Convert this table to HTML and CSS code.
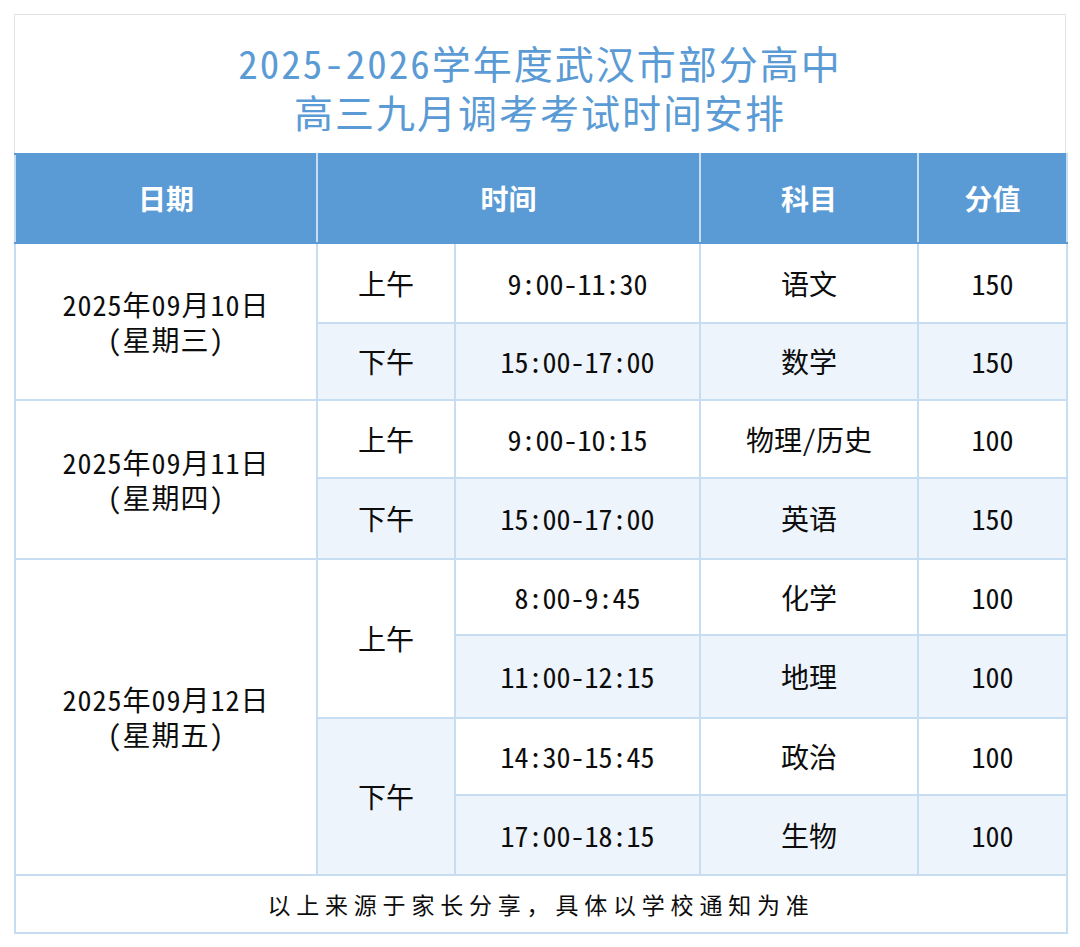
FILE: index.html
```html
<!DOCTYPE html>
<html lang="zh-CN">
<head>
<meta charset="utf-8">
<title>2025-2026学年度武汉市部分高中高三九月调考考试时间安排</title>
<link rel="stylesheet" href="styles.css">
</head>
<body>
<div class="sheet">
  <div class="title">
    <div class="title-line">2025-2026学年度武汉市部分高中</div>
    <div class="title-line">高三九月调考考试时间安排</div>
  </div>
  <table class="sched">
    <colgroup>
      <col class="c-date"><col class="c-half"><col class="c-time"><col class="c-subj"><col class="c-score">
    </colgroup>
    <thead>
      <tr class="h-row">
        <th>日期</th>
        <th colspan="2">时间</th>
        <th>科目</th>
        <th>分值</th>
      </tr>
    </thead>
    <tbody>
      <tr class="r1">
        <td rowspan="2" class="date"><div class="d-line">2025年09月10日</div><div class="d-line">(星期三)</div></td>
        <td>上午</td>
        <td>9:00-11:30</td>
        <td>语文</td>
        <td>150</td>
      </tr>
      <tr class="r2 alt">
        <td>下午</td>
        <td>15:00-17:00</td>
        <td>数学</td>
        <td>150</td>
      </tr>
      <tr class="r3">
        <td rowspan="2" class="date"><div class="d-line">2025年09月11日</div><div class="d-line">(星期四)</div></td>
        <td>上午</td>
        <td>9:00-10:15</td>
        <td>物理/历史</td>
        <td>100</td>
      </tr>
      <tr class="r4 alt">
        <td>下午</td>
        <td>15:00-17:00</td>
        <td>英语</td>
        <td>150</td>
      </tr>
      <tr class="r5">
        <td rowspan="4" class="date"><div class="d-line">2025年09月12日</div><div class="d-line">(星期五)</div></td>
        <td rowspan="2" class="white">上午</td>
        <td>8:00-9:45</td>
        <td>化学</td>
        <td>100</td>
      </tr>
      <tr class="r6 alt">
        <td>11:00-12:15</td>
        <td>地理</td>
        <td>100</td>
      </tr>
      <tr class="r7">
        <td rowspan="2" class="tint">下午</td>
        <td>14:30-15:45</td>
        <td>政治</td>
        <td>100</td>
      </tr>
      <tr class="r8 alt">
        <td>17:00-18:15</td>
        <td>生物</td>
        <td>100</td>
      </tr>
      <tr class="f-row">
        <td colspan="5" class="note">以上来源于家长分享，具体以学校通知为准</td>
      </tr>
    </tbody>
  </table>
</div>
</body>
</html>
```

FILE: styles.css
```css
html, body {
  margin: 0;
  padding: 0;
  background: #ffffff;
}

body {
  font-family: "Noto Sans Mono CJK SC", "Noto Sans CJK SC", sans-serif;
  color: #111111;
}

.sheet {
  width: 1052px;
  margin: 14px 0 0 14px;
}

.title {
  box-sizing: border-box;
  height: 139px;
  border: 1px solid #e2e2e2;
  border-bottom: none;
  padding-top: 23px;
  text-align: center;
  color: #5b9bd5;
  font-size: 39px;
  line-height: 49px;
  letter-spacing: 2px;
  font-weight: 500;
}

.sched {
  width: 1052px;
  table-layout: fixed;
  border-collapse: collapse;
  border: 2px solid #7fb1e1;
}

.c-date { width: 302px; }
.c-half { width: 138px; }
.c-time { width: 245px; }
.c-subj { width: 218px; }
.c-score { width: 149px; }

.sched th,
.sched td {
  padding: 0;
  text-align: center;
  vertical-align: middle;
  font-size: 28px;
  line-height: 35px;
  font-weight: 400;
  border: 2px solid #c7ddf1;
  background: #ffffff;
  color: #0d0d0d;
}

.sched th {
  background: #5b9bd5;
  color: #ffffff;
  font-weight: 700;
  border-top: 2px solid #5b9bd5;
  border-bottom: 2px solid #5b9bd5;
}

.h-row { height: 89px; }
.r1 { height: 80px; }
.r2 { height: 77px; }
.r3 { height: 78px; }
.r4 { height: 81px; }
.r5 { height: 76px; }
.r6 { height: 83px; }
.r7 { height: 77px; }
.r8 { height: 80px; }
.f-row { height: 58px; }

.sched .alt td,
.sched td.tint {
  background: #eef4fb;
}

.sched td.date,
.sched td.white {
  background: #ffffff;
}

.sched td.date {
  font-size: 28px;
  letter-spacing: 1px;
}

.d-line {
  height: 35px;
  line-height: 35px;
  overflow: visible;
}

.sched td.note {
  font-size: 23px;
  letter-spacing: 5.8px;
  border-top: 2px solid #c7ddf1;
}
```
